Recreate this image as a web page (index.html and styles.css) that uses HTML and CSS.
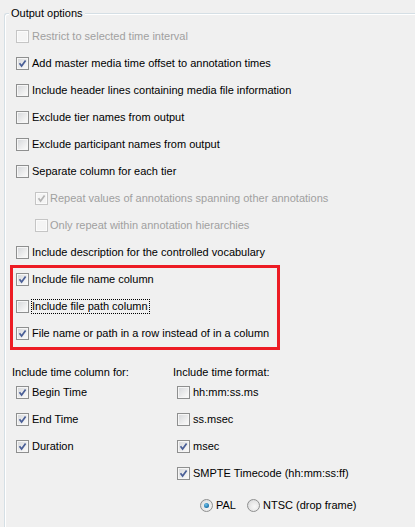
FILE: index.html
```html
<!DOCTYPE html>
<html>
<head>
<meta charset="utf-8">
<link rel="stylesheet" href="styles.css">
</head>
<body>
<fieldset class="group">
  <legend class="legend">Output options</legend>
  <div class="opts">
    <div class="row disabled"><span class="cb"></span><span class="lbl">Restrict to selected time interval</span></div>
    <div class="row"><span class="cb"><svg viewBox="0 0 11 11"><path d="M2.5 5.2 L4.6 8 L8.6 2.4" /></svg></span><span class="lbl">Add master media time offset to annotation times</span></div>
    <div class="row"><span class="cb"></span><span class="lbl">Include header lines containing media file information</span></div>
    <div class="row"><span class="cb"></span><span class="lbl">Exclude tier names from output</span></div>
    <div class="row"><span class="cb"></span><span class="lbl">Exclude participant names from output</span></div>
    <div class="row"><span class="cb"></span><span class="lbl">Separate column for each tier</span></div>
    <div class="row sub disabled"><span class="cb"><svg viewBox="0 0 11 11"><path d="M2.5 5.2 L4.6 8 L8.6 2.4" /></svg></span><span class="lbl">Repeat values of annotations spanning other annotations</span></div>
    <div class="row sub disabled"><span class="cb"></span><span class="lbl">Only repeat within annotation hierarchies</span></div>
    <div class="row"><span class="cb"></span><span class="lbl">Include description for the controlled vocabulary</span></div>
    <div class="highlight-wrap">
      <div class="row"><span class="cb"><svg viewBox="0 0 11 11"><path d="M2.5 5.2 L4.6 8 L8.6 2.4" /></svg></span><span class="lbl">Include file name column</span></div>
      <div class="row"><span class="cb"></span><span class="lbl focus">Include file path column</span></div>
      <div class="row"><span class="cb"><svg viewBox="0 0 11 11"><path d="M2.5 5.2 L4.6 8 L8.6 2.4" /></svg></span><span class="lbl">File name or path in a row instead of in a column</span></div>
      <div class="highlight"></div>
    </div>
  </div>
  <div class="times">
    <div class="col">
      <div class="head">Include time column for:</div>
      <div class="row"><span class="cb"><svg viewBox="0 0 11 11"><path d="M2.5 5.2 L4.6 8 L8.6 2.4" /></svg></span><span class="lbl">Begin Time</span></div>
      <div class="row"><span class="cb"><svg viewBox="0 0 11 11"><path d="M2.5 5.2 L4.6 8 L8.6 2.4" /></svg></span><span class="lbl">End Time</span></div>
      <div class="row"><span class="cb"><svg viewBox="0 0 11 11"><path d="M2.5 5.2 L4.6 8 L8.6 2.4" /></svg></span><span class="lbl">Duration</span></div>
    </div>
    <div class="col">
      <div class="head">Include time format:</div>
      <div class="row"><span class="cb"></span><span class="lbl">hh:mm:ss.ms</span></div>
      <div class="row"><span class="cb"></span><span class="lbl">ss.msec</span></div>
      <div class="row"><span class="cb"><svg viewBox="0 0 11 11"><path d="M2.5 5.2 L4.6 8 L8.6 2.4" /></svg></span><span class="lbl">msec</span></div>
      <div class="row"><span class="cb"><svg viewBox="0 0 11 11"><path d="M2.5 5.2 L4.6 8 L8.6 2.4" /></svg></span><span class="lbl">SMPTE Timecode (hh:mm:ss:ff)</span></div>
      <div class="radios">
        <span class="radio on"></span><span class="lbl">PAL</span>
        <span class="radio second"></span><span class="lbl">NTSC (drop frame)</span>
      </div>
    </div>
  </div>
</fieldset>
</body>
</html>
```
FILE: styles.css
```css
html, body {
  margin: 0;
  padding: 0;
  background: #f0f0f0;
  overflow: hidden;
}
body {
  font-family: "Liberation Sans", Arial, sans-serif;
  font-size: 11px;
  color: #000;
  width: 415px;
  height: 527px;
}
.group {
  margin: 6px 0 0 4px;
  padding: 3px 0 0 0;
  height: 521px;
  min-width: 0;
  border: 1px solid #d5dfe5;
  border-right: none;
  border-bottom: none;
  border-top-left-radius: 3px;
  box-shadow: inset 1px 1px 0 #fff;
  box-sizing: border-box;
}
.legend {
  margin-left: 4px;
  padding: 0 2px;
  line-height: 14px;
  background: #f0f0f0;
}
.opts {
  padding-left: 11px;
}
.row {
  display: flex;
  align-items: center;
  height: 27px;
  gap: 3px;
}
.row.sub {
  margin-left: 19px;
  gap: 2px;
}
.lbl {
  white-space: nowrap;
  line-height: 13px;
}
.disabled .lbl {
  color: #a0a0a0;
}
.cb {
  flex: none;
  width: 13px;
  height: 13px;
  box-sizing: border-box;
  border: 1px solid #8e8f8f;
  background: linear-gradient(135deg, #d4d6d9 0%, #f2f2f2 70%, #fbfbfb 100%);
  box-shadow: inset 0 0 0 1px #f6f6f6;
  display: flex;
  align-items: center;
  justify-content: center;
}
.cb svg {
  width: 11px;
  height: 11px;
  display: block;
}
.cb svg path {
  fill: none;
  stroke: #4a5f97;
  stroke-width: 1.7;
}
.disabled .cb {
  border-color: #c5c5c5;
  background: #f4f4f4;
  box-shadow: inset 0 0 0 1px #fbfbfb;
}
.disabled .cb svg path {
  stroke: #b4b4b4;
}
.focus {
  outline: 1px dotted #000;
  outline-offset: 0;
  padding: 0 1px 0 0;
}
.highlight-wrap {
  position: relative;
}
.highlight {
  position: absolute;
  top: -1px;
  left: -6px;
  width: 270px;
  height: 85px;
  border: 3px solid #ed1c24;
  box-sizing: border-box;
  pointer-events: none;
}
.times {
  display: grid;
  grid-template-columns: 161px 1fr;
  padding-left: 7px;
  margin-top: 18px;
}
.col .row {
  margin-left: 4px;
}
.head {
  line-height: 14px;
  height: 14px;
  white-space: nowrap;
}
.radios {
  display: flex;
  align-items: center;
  height: 27px;
  margin-top: 5px;
  margin-left: 27px;
  gap: 3px;
}
.radio {
  flex: none;
  width: 13px;
  height: 13px;
  box-sizing: border-box;
  border-radius: 50%;
  border: 1px solid #8e8f8f;
  background: radial-gradient(circle at 60% 60%, #f8f8f8 0%, #e6e6e6 55%, #cfd1d4 100%);
  display: flex;
  align-items: center;
  justify-content: center;
}
.radio.on::after {
  content: "";
  width: 5px;
  height: 5px;
  border-radius: 50%;
  background: radial-gradient(circle at 40% 35%, #6fc3ea, #1a6fa8 70%, #0d4f85);
}
.radio.second {
  margin-left: 8px;
}
```
